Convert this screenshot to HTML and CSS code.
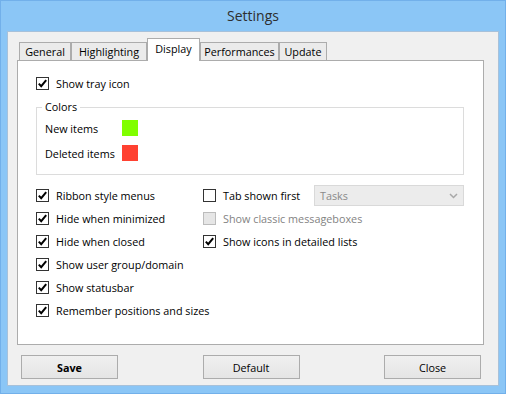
FILE: index.html
```html
<!DOCTYPE html>
<html lang="en">
<head>
  <meta charset="UTF-8" />
  <title>Settings</title>
  <link rel="stylesheet" href="styles.css">
</head>
<body>
  <div class="window">
    <div class="titlebar">Settings</div>
    <div class="client">
      <div class="tabs">
        <div class="tab tab-general">General</div>
        <div class="tab tab-highlight">Highlighting</div>
        <div class="tab tab-display active">Display</div>
        <div class="tab tab-perf">Performances</div>
        <div class="tab tab-update">Update</div>
      </div>

      <div class="panel">
        <label class="row">
          <span class="check on"><svg viewBox="0 0 11 11"><path d="M1.8 5.6 L4.2 8.2 L9.2 2.2" /></svg></span>
          Show tray icon
        </label>

        <fieldset class="group">
          <legend>Colors</legend>
          <div class="color-row">
            <span class="color-label">New items</span>
            <span class="swatch swatch-new"></span>
          </div>
          <div class="color-row">
            <span class="color-label">Deleted items</span>
            <span class="swatch swatch-deleted"></span>
          </div>
        </fieldset>

        <div class="columns">
          <div class="col col-left">
            <label class="row"><span class="check on"><svg viewBox="0 0 11 11"><path d="M1.8 5.6 L4.2 8.2 L9.2 2.2" /></svg></span>Ribbon style menus</label>
            <label class="row"><span class="check on"><svg viewBox="0 0 11 11"><path d="M1.8 5.6 L4.2 8.2 L9.2 2.2" /></svg></span>Hide when minimized</label>
            <label class="row"><span class="check on"><svg viewBox="0 0 11 11"><path d="M1.8 5.6 L4.2 8.2 L9.2 2.2" /></svg></span>Hide when closed</label>
            <label class="row"><span class="check on"><svg viewBox="0 0 11 11"><path d="M1.8 5.6 L4.2 8.2 L9.2 2.2" /></svg></span>Show user group/domain</label>
            <label class="row"><span class="check on"><svg viewBox="0 0 11 11"><path d="M1.8 5.6 L4.2 8.2 L9.2 2.2" /></svg></span>Show statusbar</label>
            <label class="row"><span class="check on"><svg viewBox="0 0 11 11"><path d="M1.8 5.6 L4.2 8.2 L9.2 2.2" /></svg></span>Remember positions and sizes</label>
          </div>
          <div class="col col-right">
            <div class="row">
              <span class="check"></span>Tab shown first
              <div class="combo">
                <span>Tasks</span>
                <svg class="chevron" viewBox="0 0 9 6"><path d="M1 1 L4.5 4.5 L8 1" /></svg>
              </div>
            </div>
            <label class="row disabled"><span class="check"></span>Show classic messageboxes</label>
            <label class="row"><span class="check on"><svg viewBox="0 0 11 11"><path d="M1.8 5.6 L4.2 8.2 L9.2 2.2" /></svg></span>Show icons in detailed lists</label>
          </div>
        </div>
      </div>

      <div class="buttons">
        <button class="btn btn-save">Save</button>
        <button class="btn">Default</button>
        <button class="btn">Close</button>
      </div>
    </div>
  </div>
</body>
</html>
```

FILE: styles.css
```css
body {
  margin: 0;
  padding: 0;
  font-family: "Open Sans", "Noto Sans", sans-serif;
  font-size: 10.8px;
  color: #000;
}

.window {
  width: 506px;
  height: 394px;
  box-sizing: border-box;
  background-color: #8bc6f6;
  border: 1px solid #72b0ea;
  padding: 0 6px 7px 6px;
  display: flex;
  flex-direction: column;
}

.titlebar {
  height: 30px;
  line-height: 30px;
  text-align: center;
  font-size: 14px;
  color: #2e2e2e;
}

.client {
  flex: 1;
  background-color: #f0f0f0;
  border: 1px solid #a7c1da;
  padding: 6px 14px 6px 9px;
  display: flex;
  flex-direction: column;
}

/* tab strip */
.tabs {
  display: flex;
  align-items: flex-end;
  height: 22px;
  padding-left: 2px;
  position: relative;
  z-index: 1;
}

.tab {
  box-sizing: border-box;
  height: 18px;
  line-height: 18px;
  text-align: center;
  background-color: #ebebeb;
  border: 1px solid #acacac;
  border-bottom: none;
}

.tab-general { width: 52px; }
.tab-highlight { width: 76px; }
.tab-display { width: 53px; }
.tab-perf { width: 79px; }
.tab-update { width: 48px; }

.tab.active {
  height: 23px;
  line-height: 20px;
  background-color: #fff;
  margin-bottom: -1px;
}

.panel {
  box-sizing: border-box;
  height: 285px;
  background-color: #fff;
  border: 1px solid #acacac;
  padding: 11px 0 0 18px;
}

.row {
  display: flex;
  align-items: center;
  height: 23px;
  white-space: nowrap;
}

.check {
  box-sizing: border-box;
  width: 13px;
  height: 13px;
  border: 1px solid #333;
  background: #fff;
  margin-right: 7px;
  display: flex;
  flex-shrink: 0;
}

.check svg {
  width: 11px;
  height: 11px;
}

.check svg path {
  fill: none;
  stroke: #000;
  stroke-width: 2;
}

.row.disabled {
  color: #838383;
}

.row.disabled .check {
  background: #e6e6e6;
  border-color: #bcbcbc;
}

/* colors group */
.group {
  width: 428px;
  box-sizing: border-box;
  margin: 4px 0 0 0;
  border: 1px solid #dcdcdc;
  padding: 5px 0 13px 8px;
}

.group legend {
  padding: 0 3px;
  margin-left: -3px;
  line-height: 16px;
}

.color-row {
  display: flex;
  align-items: center;
  height: 16px;
}

.color-row + .color-row {
  margin-top: 9px;
}

.color-label {
  width: 77px;
}

.swatch {
  width: 16px;
  height: 16px;
}

.swatch-new { background-color: #80ff00; }
.swatch-deleted { background-color: #ff4131; }

.columns {
  display: flex;
  margin-top: 9px;
}

.col-left {
  width: 167px;
}

.col-right {
  width: 261px;
}

.combo {
  box-sizing: border-box;
  width: 150px;
  height: 21px;
  margin-left: auto;
  background-color: #ececec;
  border: 1px solid #d9d9d9;
  color: #8a8a8a;
  display: flex;
  align-items: center;
  justify-content: space-between;
  padding: 0 5px 0 5px;
}

.chevron {
  width: 9px;
  height: 6px;
}

.chevron path {
  fill: none;
  stroke: #a8a8a8;
  stroke-width: 1.5;
}

/* bottom buttons */
.buttons {
  display: flex;
  justify-content: space-between;
  margin-top: 10px;
  padding: 0 3px 0 4px;
}

.btn {
  width: 97px;
  height: 24px;
  font-family: inherit;
  font-size: 10.8px;
  color: #000;
  background: linear-gradient(#f0f0f0, #e5e5e5);
  border: 1px solid #acacac;
  padding: 0;
}

.btn-save {
  font-weight: bold;
}
```
